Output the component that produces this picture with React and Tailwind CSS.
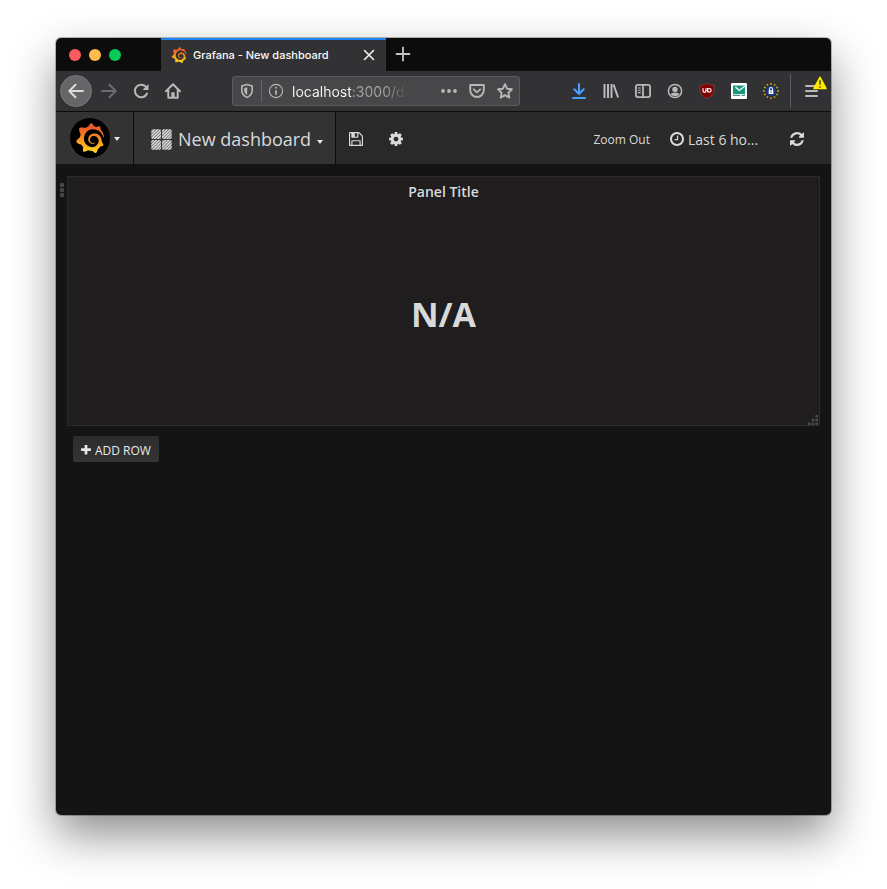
import React from "react";
import { SiGrafana } from "react-icons/si";

function FlameDefs() {
  return (
    <svg width="0" height="0" className="absolute" aria-hidden="true">
      <defs>
        <linearGradient id="flame" x1="0" y1="1" x2="0" y2="0">
          <stop offset="0" stopColor="#fcd81f" />
          <stop offset="0.35" stopColor="#fba31a" />
          <stop offset="0.85" stopColor="#f05a28" />
        </linearGradient>
      </defs>
    </svg>
  );
}

const FA = {
  save: "M512 1536h768v-384h-768v384zm896 0h128v-896q0-14-10-38.5t-20-34.5l-281-281q-10-10-34-20t-39-10v416q0 40-28 68t-68 28h-576q-40 0-68-28t-28-68v-416h-128v1280h128v-416q0-40 28-68t68-28h832q40 0 68 28t28 68v416zm-384-928v-320q0-13-9.5-22.5t-22.5-9.5h-192q-13 0-22.5 9.5t-9.5 22.5v320q0 13 9.5 22.5t22.5 9.5h192q13 0 22.5-9.5t9.5-22.5zm640 32v928q0 40-28 68t-68 28h-1344q-40 0-68-28t-28-68v-1344q0-40 28-68t68-28h928q40 0 88 20t76 48l280 280q28 28 48 76t20 88z",
  cog: "M1152 896q0-106-75-181t-181-75-181 75-75 181 75 181 181 75 181-75 75-181zm512-109v222q0 12-8 23t-20 13l-185 28q-19 54-39 91 35 50 107 138 10 12 10 25t-9 23q-27 37-99 108t-94 71q-12 0-26-9l-138-108q-44 23-91 38-16 136-29 186-7 28-36 28h-222q-14 0-24.5-8.5t-11.5-21.5l-28-184q-49-16-90-37l-141 107q-10 9-25 9-14 0-25-11-126-114-165-168-7-10-7-23 0-12 8-23 15-21 51-66.5t54-70.5q-27-50-41-99l-183-27q-13-2-21-12.5t-8-23.5v-222q0-12 8-23t19-13l186-28q14-46 39-92-40-57-107-138-10-12-10-24 0-10 9-23 26-36 98.5-107.5t94.5-71.5q13 0 26 10l138 107q44-23 91-38 16-136 29-186 7-28 36-28h222q14 0 24.5 8.5t11.5 21.5l28 184q49 16 90 37l142-107q9-9 24-9 13 0 25 10 129 119 165 170 7 8 7 22 0 12-8 23-15 21-51 66.5t-54 70.5q26 50 41 98l183 28q13 2 21 12.5t8 23.5z",
  clock: "M1024 544v448q0 14-9 23t-23 9h-320q-14 0-23-9t-9-23v-64q0-14 9-23t23-9h224v-352q0-14 9-23t23-9h64q14 0 23 9t9 23zm416 352q0-148-73-273t-198-198-273-73-273 73-198 198-73 273 73 273 198 198 273 73 273-73 198-198 73-273zm224 0q0 209-103 385.5t-279.5 279.5-385.5 103-385.5-103-279.5-279.5-103-385.5 103-385.5 279.5-279.5 385.5-103 385.5 103 279.5 279.5 103 385.5z",
  plus: "M1600 736v192q0 40-28 68t-68 28h-416v416q0 40-28 68t-68 28h-192q-40 0-68-28t-28-68v-416h-416q-40 0-68-28t-28-68v-192q0-40 28-68t68-28h416v-416q0-40 28-68t68-28h192q40 0 68 28t28 68v416h416q40 0 68 28t28 68z",
  refresh: "M1511 928q0 5-1 7-64 268-268 434.5t-478 166.5q-146 0-282.5-55t-243.5-157l-129 129q-19 19-45 19t-45-19-19-45v-448q0-26 19-45t45-19h448q26 0 45 19t19 45-19 45l-137 137q71 66 161 102t187 36q134 0 250-65t186-179q11-17 53-117 8-23 30-23h192q13 0 22.5 9.5t9.5 22.5zm25-800v448q0 26-19 45t-45 19h-448q-26 0-45-19t-19-45 19-45l138-138q-148-137-349-137-134 0-250 65t-186 179q-11 17-53 117-8 23-30 23h-199q-13 0-22.5-9.5t-9.5-22.5v-7q65-268 270-434.5t480-166.5q146 0 284 55.5t245 156.5l130-129q19-19 45-19t45 19 19 45z",
};

function Fa({ name, box = "128 128 1536 1536", className }) {
  return (
    <svg viewBox={box} fill="currentColor" className={className} aria-hidden="true">
      <path d={FA[name]} />
    </svg>
  );
}

function Line({ children, className = "size-4", sw = 2 }) {
  return (
    <svg
      viewBox="0 0 16 16"
      fill="none"
      stroke="currentColor"
      strokeWidth={sw}
      strokeLinecap="round"
      strokeLinejoin="round"
      className={className}
      aria-hidden="true"
    >
      {children}
    </svg>
  );
}

function ToolButton({ label, className = "", children }) {
  return (
    <button type="button" aria-label={label} className={`flex size-8 shrink-0 items-center justify-center ${className}`}>
      {children}
    </button>
  );
}

function TabStrip() {
  return (
    <div className="flex h-[33px] shrink-0 bg-[#0c0c0c]">
      <div className="flex w-[105px] shrink-0 items-center gap-2 pl-[13px]">
        <button type="button" aria-label="Close window" className="size-3 rounded-full bg-[#fc5b5b]" />
        <button type="button" aria-label="Minimize window" className="size-3 rounded-full bg-[#fdbc4b]" />
        <button type="button" aria-label="Zoom window" className="size-3 rounded-full bg-[#06c957]" />
      </div>
      <div className="flex w-[225px] shrink-0 items-center border-t-2 border-[#1a84f5] bg-[#323234] pr-[9px] pl-[10px]">
        <SiGrafana className="mb-0.5 size-4 shrink-0" fill="url(#flame)" />
        <span className="ml-1.5 flex-1 truncate text-[11px] font-medium text-[#f9f9fa]">Grafana - New dashboard</span>
        <button type="button" aria-label="Close tab" className="mb-0.5 flex size-4 items-center justify-center text-[#f0f0f1]">
          <Line sw={1.6}>
            <path d="M3.500 3.500l9 9M12.500 3.500l-9 9" />
          </Line>
        </button>
      </div>
      <button type="button" aria-label="New tab" className="flex w-[34px] items-center justify-center pb-0.5 text-[#c4c4c5]">
        <Line sw={1.8}>
          <path d="M8 1.500v13M1.500 8h13" />
        </Line>
      </button>
    </div>
  );
}

function AddressBar() {
  return (
    <div className="mx-[43px] flex h-[30px] min-w-0 flex-1 items-center rounded-[3px] border border-[#5b5b5e] bg-[#474749] text-[#b7b7b9]">
      <button type="button" aria-label="Tracking protection" className="flex w-7 shrink-0 items-center justify-center">
        <svg viewBox="0 0 16 16" className="size-4" fill="none" aria-hidden="true">
          <path d="M8 1.6L13.2 3v4.2c0 3.3-2 5.7-5.2 7.2-3.200-1.500-5.200-3.900-5.200-7.200V3z" stroke="currentColor" strokeWidth="1.6" strokeLinejoin="round" />
          <path d="M8.200 4.200L5.200 5v2.300c0 2 1 3.500 3 4.600z" fill="currentColor" />
        </svg>
      </button>
      <span className="h-[22px] w-px shrink-0 bg-[#66666a]" />
      <button type="button" aria-label="Site information" className="flex w-7 shrink-0 items-center justify-center">
        <svg viewBox="0 0 16 16" className="size-4" fill="none" aria-hidden="true">
          <circle cx="8" cy="8" r="6.600" stroke="currentColor" strokeWidth="1.100" />
          <circle cx="8" cy="4.800" r="1" fill="currentColor" />
          <path d="M8 7.200v4.600" stroke="currentColor" strokeWidth="1.700" />
        </svg>
      </button>
      <input
        type="text"
        aria-label="Address"
        defaultValue="localhost:3000/dashboard"
        className="h-7 min-w-0 flex-1 bg-[linear-gradient(90deg,#f9f9fa_61px,#a6a6a8_61px,#a6a6a8_94px,transparent_118px)] bg-clip-text pt-px pl-0.5 text-sm text-transparent outline-none"
      />
      <button type="button" aria-label="Page actions" className="flex w-7 shrink-0 items-center justify-center">
        <svg viewBox="0 0 16 16" className="size-4" fill="currentColor" aria-hidden="true">
          <circle cx="2" cy="8" r="1.900" />
          <circle cx="8" cy="8" r="1.900" />
          <circle cx="14" cy="8" r="1.900" />
        </svg>
      </button>
      <button type="button" aria-label="Save to Pocket" className="flex w-7 shrink-0 items-center justify-center">
        <Line sw={1.9}>
          <path d="M1.200 2h13.600v5.200a6.800 6.800 0 0 1-13.600 0z" />
          <path d="M4.800 6.400L8 9.400l3.200-3" />
        </Line>
      </button>
      <button type="button" aria-label="Bookmark this page" className="flex w-7 shrink-0 items-center justify-center">
        <Line sw={1.9}>
          <path d="M8 1.200l2.100 4.500 4.800.6-3.500 3.400.9 4.900L8 12.200l-4.300 2.400.9-4.900L1.100 6.300l4.800-.6z" />
        </Line>
      </button>
    </div>
  );
}

const STARS = Array.from({ length: 12 }, (_, i) => i * 30);

function BrowserToolbar() {
  return (
    <div className="flex h-10 shrink-0 items-center bg-[#323234] pl-1 text-[#b9b9bb]">
      <ToolButton label="Back" className="rounded-full border border-[#77777a] bg-[#666668] text-[#dcdcdd]">
        <Line>
          <path d="M15 8H1.500M7.500 1.800L1.300 8l6.200 6.200" />
        </Line>
      </ToolButton>
      <ToolButton label="Forward" className="ml-px text-[#6c6c6f]">
        <Line>
          <path d="M1 8h13.500M8.500 1.800L14.700 8l-6.200 6.200" />
        </Line>
      </ToolButton>
      <ToolButton label="Reload">
        <Line>
          <path d="M14 10.500A6.300 6.300 0 1 1 12.800 3.600l1 1" />
          <path d="M15.500 1v6H9.500z" fill="currentColor" stroke="none" />
        </Line>
      </ToolButton>
      <ToolButton label="Home">
        <Line>
          <path d="M1 8.200L8 1.300l7 6.900M3.300 7.500v7.200h9.400V7.500" />
          <path d="M6.300 14.500V9.300h3.400v5.200z" fill="currentColor" stroke="none" />
        </Line>
      </ToolButton>
      <AddressBar />
      <ToolButton label="Downloads" className="text-[#45a1ff]">
        <Line>
          <path d="M8 1v9.500M3.300 6.300L8 11l4.700-4.700M2 15h12" />
        </Line>
      </ToolButton>
      <ToolButton label="Library">
        <Line>
          <path strokeLinecap="butt" d="M1.500 1v14M5 1v14M8.500 1v14M10.500 1.500l4.600 13" />
        </Line>
      </ToolButton>
      <ToolButton label="Sidebars">
        <Line sw={1.8}>
          <rect x="0.900" y="1.900" width="14.200" height="12.200" rx="2" />
          <path d="M8 2v12" />
          <path d="M3.200 5h2.200M3.200 7.300h2.200M3.200 9.600h2.200" strokeWidth="1.100" />
        </Line>
      </ToolButton>
      <ToolButton label="Account">
        <Line sw={1.5}>
          <circle cx="8" cy="8" r="6.600" />
          <circle cx="8" cy="6.500" r="2.700" fill="currentColor" stroke="none" />
          <path d="M3.500 11.200c1-1.200 2-1.500 4.500-1.500s3.500.3 4.500 1.500c-1 1.300-2.700 2-4.500 2s-3.500-.7-4.500-2z" fill="currentColor" stroke="none" />
        </Line>
      </ToolButton>
      <ToolButton label="uBlock Origin">
        <svg viewBox="0 0 16 16" className="size-4" aria-hidden="true">
          <path d="M8 .5c2 1.200 4.500 1.700 7 1.800v4.700c0 4-3 6.500-7 8.500-4-2-7-4.500-7-8.500V2.300C3.500 2.200 6 1.700 8 .5z" fill="#800000" stroke="#7d5558" strokeWidth=".6" />
          <path d="M4 5.200v2.600a1.500 1.500 0 0 0 3 0V5.200" fill="none" stroke="#fff" strokeWidth="1.200" />
          <circle cx="10.300" cy="7.300" r="1.800" fill="none" stroke="#fff" strokeWidth="1.200" />
          <path d="M8.500 5v4.300" stroke="#fff" strokeWidth="1.100" />
        </svg>
      </ToolButton>
      <ToolButton label="Mail extension">
        <svg viewBox="0 0 16 16" className="size-4" aria-hidden="true">
          <rect width="16" height="16" rx="1" fill="#fff" />
          <path d="M2 2.500h12V11H2z" fill="#17997f" />
          <path d="M4.500 4L8.200 7.500 14 3" fill="none" stroke="#fff" strokeWidth="1.200" />
          <path d="M2 12.300h7M10.500 12.300H14" stroke="#4b8f87" strokeWidth="1.200" />
        </svg>
      </ToolButton>
      <ToolButton label="Privacy extension">
        <svg viewBox="0 0 16 16" className="size-4" aria-hidden="true">
          <circle cx="8" cy="8" r="5.200" fill="#14377d" />
          {STARS.map((deg) => (
            <circle key={deg} cx="8" cy="0.900" r="0.900" fill="#d8ae12" transform={`rotate(${deg} 8 8)`} />
          ))}
          <rect x="5.700" y="7.200" width="4.600" height="3.800" fill="#fff" />
          <path d="M6.500 7.500V6a1.500 1.500 0 0 1 3 0v1.500" fill="none" stroke="#fff" strokeWidth="1.100" />
          <path d="M8 8.400v1.400" stroke="#14377d" />
        </svg>
      </ToolButton>
      <span className="ml-[3px] h-[34px] w-px shrink-0 bg-[#5c5c5f]" />
      <button type="button" aria-label="Open menu" className="relative flex h-8 w-10 shrink-0 items-center justify-center">
        <Line>
          <path d="M3 3h11M3 8h11M3 13h11" />
        </Line>
        <svg viewBox="0 0 14 14" className="absolute top-px right-1 size-3.5" aria-hidden="true">
          <path d="M7 1.300L13 12.500H1z" fill="#ffe900" stroke="#ffe900" strokeWidth="1.600" strokeLinejoin="round" />
          <path d="M7 4.200v4.600M7 10.200v1.600" stroke="#3e2800" strokeWidth="1.300" />
        </svg>
      </button>
    </div>
  );
}

function Caret() {
  return <span className="border-x-[3px] border-t-[4px] border-x-transparent border-t-[#e3e3e3]" />;
}

function DashboardIcon() {
  return (
    <svg viewBox="0 0 21 21" className="size-[21px] shrink-0" aria-hidden="true">
      <defs>
        <pattern id="hatch" width="2.200" height="2.200" patternUnits="userSpaceOnUse" patternTransform="rotate(45)">
          <rect width="2.200" height="2.200" fill="#6f6f70" />
          <rect width="1.300" height="2.200" fill="#e2e2e3" />
        </pattern>
      </defs>
      <g fill="url(#hatch)">
        <rect x="0.300" y="0.300" width="9.700" height="9.700" rx="1.500" />
        <rect x="11" y="0.300" width="9.700" height="9.700" rx="1.500" />
        <rect x="0.300" y="11" width="9.700" height="9.700" rx="1.500" />
        <rect x="11" y="11" width="9.700" height="9.700" rx="1.500" />
      </g>
    </svg>
  );
}

function DashboardNav() {
  return (
    <nav className="flex h-[53px] shrink-0 border-t border-[#0c0c0c] bg-[#292929] text-[#d8d9da]">
      <button type="button" aria-label="Grafana menu" className="flex w-[78px] shrink-0 items-center gap-1 border-r border-[#0c0c0c] bg-[#333333] pl-3.5">
        <span className="flex size-10 items-center justify-center rounded-full bg-black">
          <SiGrafana className="size-[30px]" fill="url(#flame)" />
        </span>
        <span className="flex pt-0.5"><Caret /></span>
      </button>
      <button type="button" className="flex shrink-0 items-center border-r border-[#0c0c0c] bg-[#333333] pt-0.5 pr-3 pl-[17px]">
        <DashboardIcon />
        <span className="mx-1.5 text-lg">New dashboard</span>
        <span className="flex pt-1.5"><Caret /></span>
      </button>
      <button type="button" aria-label="Save dashboard" className="flex w-10 items-center justify-center pt-0.5">
        <Fa name="save" className="size-3.5" />
      </button>
      <button type="button" aria-label="Settings" className="flex w-10 items-center justify-center pt-0.5">
        <Fa name="cog" className="size-3.5" />
      </button>
      <div className="ml-auto flex items-center pt-0.5 pr-[27px]">
        <button type="button" className="pt-0.5 text-xs">Zoom Out</button>
        <button type="button" className="ml-5 flex w-[88px] items-center gap-1 text-sm">
          <Fa name="clock" className="size-3.5 shrink-0" />
          <span className="pt-0.5 whitespace-nowrap">Last 6 ho...</span>
        </button>
        <button type="button" aria-label="Refresh" className="ml-8">
          <Fa name="refresh" box="0 0 1536 1536" className="size-3.5" />
        </button>
      </div>
    </nav>
  );
}

function Dashboard() {
  return (
    <main className="flex-1 bg-[#141414] pt-3 pr-[11px] pb-4 text-[#d8d9da]">
      <div className="flex items-start">
        <button type="button" aria-label="Row menu" className="mt-[7px] mr-[3px] ml-1 flex w-1 shrink-0 flex-col gap-px">
          <span className="size-1 rounded-[1px] bg-[#474747]" />
          <span className="size-1 rounded-[1px] bg-[#474747]" />
          <span className="size-1 rounded-[1px] bg-[#474747]" />
        </button>
        <section className="relative flex h-[250px] flex-1 flex-col border border-[#2b292a] bg-[#1f1d1e]">
          <h2 className="pt-1 text-center text-sm leading-[22px] font-semibold">Panel Title</h2>
          <p className="flex flex-1 items-center justify-center text-[34px] font-bold">N/A</p>
          <svg viewBox="0 0 10 10" className="absolute right-px bottom-0 size-2.5" fill="#4b4a4b" aria-hidden="true">
            <path d="M7.400 0H10v2.600H7.400zM7.400 3.700H10v2.600H7.400zM7.400 7.400H10V10H7.400zM3.700 3.700h2.600v2.600H3.700zM3.700 7.400h2.600V10H3.700zM0 7.400h2.600V10H0z" />
          </svg>
        </section>
      </div>
      <button
        type="button"
        className="mt-2.5 ml-[17px] flex h-[26px] items-center gap-1 rounded-[2px] bg-linear-to-b from-[#2c2c2c] to-[#343434] px-2 pt-0.5 text-xs text-[#e8e8e8]"
      >
        <Fa name="plus" box="192 192 1408 1408" className="size-2.5" />
        <span className="pt-px">ADD ROW</span>
      </button>
    </main>
  );
}

export default function App() {
  return (
    <div className="flex min-h-screen flex-col bg-white px-14 pt-[38px] pb-[74px] font-['Open_Sans','Noto_Sans',sans-serif]">
      <FlameDefs />
      <div className="flex flex-1 flex-col overflow-hidden rounded-[5px] shadow-[0_0_0_1px_rgba(0,0,0,0.25),0_20px_46px_rgba(0,0,0,0.45)]">
        <header className="shrink-0 font-['Inter','Liberation_Sans',sans-serif]">
          <TabStrip />
          <BrowserToolbar />
        </header>
        <DashboardNav />
        <Dashboard />
      </div>
    </div>
  );
}
